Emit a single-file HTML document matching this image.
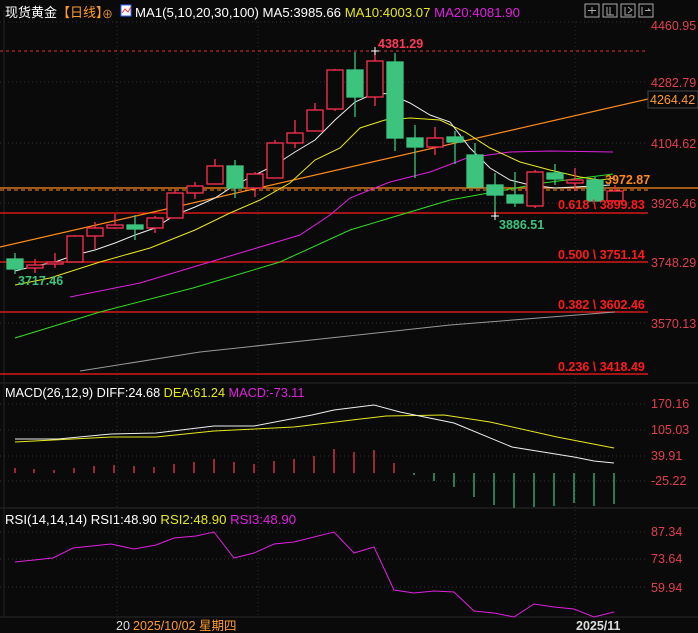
<!DOCTYPE html>
<html><head><meta charset="utf-8"><style>
html,body{margin:0;padding:0;background:#0a0a0a;}
body{width:698px;height:633px;overflow:hidden;position:relative;font-family:"Liberation Sans","Noto Sans CJK SC",sans-serif;}
svg{position:absolute;left:0;top:0}
text{font-family:"Liberation Sans","Noto Sans CJK SC",sans-serif;}
</style></head><body>
<svg width="698" height="633" viewBox="0 0 698 633">
<rect width="698" height="633" fill="#0a0a0a"/>
<g stroke="#333" stroke-dasharray="1,3" stroke-width="1">
<line x1="0" y1="22" x2="648" y2="22"/><line x1="0" y1="82" x2="648" y2="82"/><line x1="0" y1="143" x2="648" y2="143"/><line x1="0" y1="203" x2="648" y2="203"/><line x1="0" y1="262" x2="648" y2="262"/><line x1="0" y1="323" x2="648" y2="323"/>
<line x1="0" y1="404" x2="648" y2="404"/><line x1="0" y1="430" x2="648" y2="430"/><line x1="0" y1="456" x2="648" y2="456"/><line x1="0" y1="481" x2="648" y2="481"/>
<line x1="0" y1="532" x2="648" y2="532"/><line x1="0" y1="559" x2="648" y2="559"/><line x1="0" y1="587" x2="648" y2="587"/>
<line x1="117" y1="22" x2="117" y2="618"/><line x1="258" y1="22" x2="258" y2="618"/><line x1="575" y1="22" x2="575" y2="618"/>
</g>
<line x1="0" y1="383" x2="698" y2="383" stroke="#2a2a2a"/>
<line x1="0" y1="508" x2="698" y2="508" stroke="#2a2a2a"/>
<line x1="0" y1="617" x2="698" y2="617" stroke="#2a2a2a"/>
<line x1="4" y1="10" x2="4" y2="617" stroke="#222"/>
<line x1="0" y1="51" x2="648" y2="51" stroke="#e0303a" stroke-dasharray="3,3"/>
<g stroke="#ff1a1a" stroke-width="1.3">
<line x1="0" y1="213" x2="648" y2="213"/><line x1="0" y1="262" x2="648" y2="262"/><line x1="0" y1="312" x2="648" y2="312"/><line x1="0" y1="374" x2="648" y2="374"/>
</g>
<line x1="0" y1="188" x2="698" y2="188" stroke="#ff8a1a" stroke-width="1.2"/>
<line x1="0" y1="190" x2="648" y2="190" stroke="#ff8a1a" stroke-dasharray="4,3"/>
<line x1="0" y1="247" x2="648" y2="99" stroke="#ff8a1a" stroke-width="1.2"/>
<polyline fill="none" stroke="#999" stroke-width="1" points="80,371 200,352 330,338 450,325 615,312"/>
<polyline fill="none" stroke="#33dd22" stroke-width="1" points="15,338 100,312 193,288 280,262 350,230 450,200 543,183 613,174"/>
<polyline fill="none" stroke="#e020e0" stroke-width="1" points="70,297 140,283 200,265 250,250 300,235 330,215 350,198 390,182 430,172 467,158 510,152 550,151 613,152"/>
<polyline fill="none" stroke="#e8e820" stroke-width="1" points="15,285 50,278 100,262 150,248 195,230 230,213 260,200 290,183 315,160 340,148 360,128 385,120 410,118 440,120 465,132 490,148 520,162 550,170 580,177 600,180 615,178"/>
<polyline fill="none" stroke="#eee" stroke-width="1" points="15,271 35,266 55,262 75,255 95,250 115,243 135,235 155,228 175,215 195,207 215,198 235,185 255,175 275,165 295,152 315,140 335,120 355,102 375,93 390,94 410,103 430,115 450,122 470,148 490,168 510,180 530,185 555,188 575,187 595,186 610,185"/>
<g stroke-width="1.3">
<g stroke="#3cc47e" fill="#3cc47e">
<line x1="15" y1="253" x2="15" y2="274"/><rect x="7" y="259" width="16" height="10"/>
<line x1="135" y1="215" x2="135" y2="240"/><rect x="127" y="225" width="16" height="4"/>
<line x1="235" y1="160" x2="235" y2="198"/><rect x="227" y="166" width="16" height="22"/>
<line x1="355" y1="52" x2="355" y2="117"/><rect x="347" y="70" width="16" height="27"/>
<line x1="395" y1="53" x2="395" y2="151"/><rect x="387" y="62" width="16" height="76"/>
<line x1="415" y1="125" x2="415" y2="178"/><rect x="407" y="138" width="16" height="9"/>
<line x1="455" y1="131" x2="455" y2="164"/><rect x="447" y="137" width="16" height="5"/>
<line x1="475" y1="143" x2="475" y2="187"/><rect x="467" y="155" width="16" height="32"/>
<line x1="495" y1="173" x2="495" y2="217"/><rect x="487" y="185" width="16" height="10"/>
<line x1="515" y1="172" x2="515" y2="207"/><rect x="507" y="195" width="16" height="8"/>
<line x1="555" y1="164" x2="555" y2="185"/><rect x="547" y="173" width="16" height="6"/>
<line x1="595" y1="177" x2="595" y2="201"/><rect x="587" y="180" width="16" height="21"/>
</g>
<g stroke="#ff3050" fill="#0a0a0a">
<line x1="35" y1="259" x2="35" y2="273"/><rect x="27" y="265" width="16" height="3"/>
<line x1="55" y1="253" x2="55" y2="268"/><rect x="47" y="262" width="16" height="2"/>
<line x1="75" y1="235" x2="75" y2="262"/><rect x="67" y="236" width="16" height="26"/>
<line x1="95" y1="222" x2="95" y2="249"/><rect x="87" y="228" width="16" height="8"/>
<line x1="115" y1="214" x2="115" y2="229"/><rect x="107" y="225" width="16" height="3"/>
<line x1="155" y1="216" x2="155" y2="233"/><rect x="147" y="218" width="16" height="10"/>
<line x1="175" y1="189" x2="175" y2="218"/><rect x="167" y="193" width="16" height="25"/>
<line x1="195" y1="182" x2="195" y2="199"/><rect x="187" y="186" width="16" height="7"/>
<line x1="215" y1="159" x2="215" y2="184"/><rect x="207" y="166" width="16" height="18"/>
<line x1="255" y1="172" x2="255" y2="197"/><rect x="247" y="174" width="16" height="14"/>
<line x1="275" y1="140" x2="275" y2="178"/><rect x="267" y="143" width="16" height="35"/>
<line x1="295" y1="120" x2="295" y2="148"/><rect x="287" y="133" width="16" height="10"/>
<line x1="315" y1="103" x2="315" y2="131"/><rect x="307" y="110" width="16" height="21"/>
<line x1="335" y1="69" x2="335" y2="111"/><rect x="327" y="70" width="16" height="39"/>
<line x1="375" y1="51" x2="375" y2="106"/><rect x="367" y="61" width="16" height="36"/>
<line x1="435" y1="127" x2="435" y2="155"/><rect x="427" y="138" width="16" height="9"/>
<line x1="535" y1="170" x2="535" y2="208"/><rect x="527" y="172" width="16" height="34"/>
<line x1="575" y1="168" x2="575" y2="191"/><rect x="567" y="180" width="16" height="3"/>
<line x1="615" y1="185" x2="615" y2="201"/><rect x="607" y="191" width="16" height="10"/>
</g>
</g>
<path d="M371 51h8M375 47v8M491 216h8M495 212v8" stroke="#fff" stroke-width="1"/>
<g font-size="12.5" font-weight="bold">
<text x="378" y="48" fill="#ff3b55">4381.29</text>
<text x="18" y="285" fill="#3cc47e">3717.46</text>
<text x="499" y="229" fill="#3cc47e">3886.51</text>
<text x="605" y="184" fill="#ff8a1a">3972.87</text>
<text x="558" y="209" fill="#ff1a1a">0.618 \ 3899.83</text>
<text x="558" y="259" fill="#ff1a1a">0.500 \ 3751.14</text>
<text x="558" y="309" fill="#ff1a1a">0.382 \ 3602.46</text>
<text x="558" y="371" fill="#ff1a1a">0.236 \ 3418.49</text>
</g>
<g font-size="12.5" fill="#e0404e">
<text x="651" y="30">4460.95</text>
<text x="651" y="87">4282.79</text>
<text x="651" y="148">4104.62</text>
<text x="651" y="208">3926.46</text>
<text x="651" y="267">3748.29</text>
<text x="651" y="328">3570.13</text>
<text x="651" y="408">170.16</text>
<text x="651" y="434">105.03</text>
<text x="651" y="460">39.91</text>
<text x="651" y="485">-25.22</text>
<text x="651" y="536">87.34</text>
<text x="651" y="563">73.64</text>
<text x="651" y="592">59.94</text>
</g>
<rect x="648" y="91" width="50" height="17" fill="#0a0a0a" stroke="#444"/>
<text x="650" y="104" font-size="12.5" fill="#ff9a30">4264.42</text>
<text x="5" y="17" font-size="13" fill="#fff">现货黄金</text>
<text x="57" y="17" font-size="13" fill="#ff9a30">【日线】</text>
<text x="102" y="18" font-size="11" fill="#ff9a30">⊕</text>
<rect x="121" y="5" width="10" height="11" fill="#fff" stroke="#36f"/>
<path d="M122 13l3-4 3 3 3-5" stroke="#f33" fill="none"/>
<text x="135" y="17" font-size="13.2"><tspan fill="#fff">MA1(5,10,20,30,100) MA5:3985.66 </tspan><tspan fill="#e8e820">MA10:4003.07 </tspan><tspan fill="#e020e0">MA20:4081.90</tspan></text>
<g stroke="#aaa" fill="none">
<rect x="585" y="4" width="14" height="13"/><rect x="603" y="4" width="14" height="13"/><rect x="621" y="4" width="14" height="13"/><rect x="639" y="4" width="14" height="13"/>
<path d="M592 7v7M588 10.5h8M607 7v8h7M610 7v8M625 7v8h7M628 7l4 3-4 3M642 7v8M645 10.5h5l-2-2"/>
</g>
<text x="5" y="397" font-size="12.7"><tspan fill="#fff">MACD(26,12,9) DIFF:24.68 </tspan><tspan fill="#e8e820">DEA:61.24 </tspan><tspan fill="#e020e0">MACD:-73.11</tspan></text>
<g stroke="#ff3b55" stroke-width="1.2">
<line x1="15" y1="473" x2="15" y2="468"/><line x1="34" y1="473" x2="34" y2="469"/><line x1="54" y1="473" x2="54" y2="470"/><line x1="74" y1="473" x2="74" y2="468"/><line x1="94" y1="473" x2="94" y2="466"/><line x1="114" y1="473" x2="114" y2="465"/><line x1="134" y1="473" x2="134" y2="466"/><line x1="154" y1="473" x2="154" y2="467"/><line x1="174" y1="473" x2="174" y2="464"/><line x1="194" y1="473" x2="194" y2="462"/><line x1="214" y1="473" x2="214" y2="459"/><line x1="234" y1="473" x2="234" y2="462"/><line x1="254" y1="473" x2="254" y2="464"/><line x1="274" y1="473" x2="274" y2="461"/><line x1="294" y1="473" x2="294" y2="459"/><line x1="314" y1="473" x2="314" y2="456"/><line x1="334" y1="473" x2="334" y2="449"/><line x1="354" y1="473" x2="354" y2="452"/><line x1="374" y1="473" x2="374" y2="450"/><line x1="394" y1="473" x2="394" y2="463"/>
</g>
<g stroke="#3cc47e" stroke-width="1.2">
<line x1="414" y1="473" x2="414" y2="475"/><line x1="434" y1="473" x2="434" y2="481"/><line x1="454" y1="473" x2="454" y2="487"/><line x1="474" y1="473" x2="474" y2="497"/><line x1="494" y1="473" x2="494" y2="505"/><line x1="514" y1="473" x2="514" y2="508"/><line x1="534" y1="473" x2="534" y2="507"/><line x1="554" y1="473" x2="554" y2="506"/><line x1="574" y1="473" x2="574" y2="503"/><line x1="594" y1="473" x2="594" y2="506"/><line x1="614" y1="473" x2="614" y2="504"/>
</g>
<polyline fill="none" stroke="#e8e820" points="15,442 111,437 156,437 214,431 294,427 352,420 386,416 444,415 490,422 557,437 614,448"/>
<polyline fill="none" stroke="#eee" points="15,439 58,439 111,434 156,433 214,426 254,426 312,415 334,410 374,405 400,412 454,423 512,447 574,457 594,461 614,463"/>
<text x="5" y="524" font-size="13.2"><tspan fill="#fff">RSI(14,14,14) RSI1:48.90 </tspan><tspan fill="#e8e820">RSI2:48.90 </tspan><tspan fill="#e020e0">RSI3:48.90</tspan></text>
<polyline fill="none" stroke="#e020e0" points="15,562 53,558 73,548 111,544 134,549 156,545 174,538 196,536 214,532 234,558 254,553 274,544 294,542 334,532 354,553 374,547 394,590 414,593 434,591 454,592 474,611 494,613 514,617 534,604 554,607 574,609 594,617 614,612"/>
<text x="116" y="630" font-size="12.5" fill="#ddd">20</text>
<text x="133" y="630" font-size="12.5" fill="#ff9a30">2025/10/02 星期四</text>
<text x="576" y="630" font-size="12.5" font-weight="bold" fill="#ddd">2025/11</text>
</svg>
</body></html>
